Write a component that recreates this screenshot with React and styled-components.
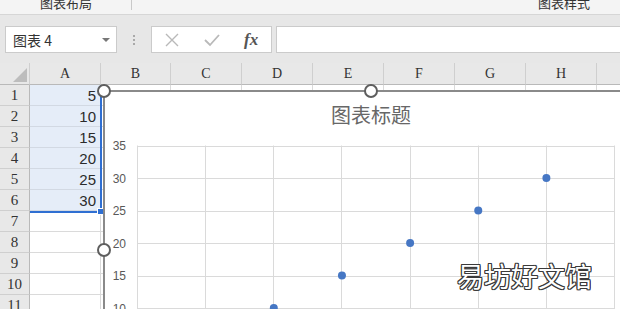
import React from 'react';
import styled, { createGlobalStyle } from 'styled-components';

const COLS = ['A', 'B', 'C', 'D', 'E', 'F', 'G', 'H', 'I'];
const WIDTHS = [30, 71, 70, 71, 71, 71, 71, 71, 71, 71];
const VALUES = [5, 10, 15, 20, 25, 30];
const ROW_COUNT = 11;

// plot geometry inside the chart svg
const X0 = 32;
const STEP_X = 68.15;
const Y0 = 8.5;
const STEP_Y = 32.5;

const GlobalStyle = createGlobalStyle`
  body {
    margin: 0;
    font-family: "Noto Sans CJK SC", "Liberation Sans", sans-serif;
    overflow: hidden;
  }
`;

const App = () => {
  return (
    <Page>
      <GlobalStyle />
      <Ribbon>
        <RibbonGroup>
          <RibbonLabel>图表布局</RibbonLabel>
        </RibbonGroup>
        <RibbonRight>
          <RibbonLabel>图表样式</RibbonLabel>
        </RibbonRight>
      </Ribbon>

      <Toolbar>
        <NameBox>
          <span>图表 4</span>
          <DropArrow />
        </NameBox>
        <Grip>
          <i />
          <i />
          <i />
        </Grip>
        <FormulaButtons>
          <IconSlot>
            <svg width="14" height="14" viewBox="0 0 14 14">
              <path d="M1 1 L13 13 M13 1 L1 13" stroke="#b9b9b9" strokeWidth="1.4" fill="none" />
            </svg>
          </IconSlot>
          <IconSlot>
            <svg width="16" height="14" viewBox="0 0 16 14">
              <path d="M1 7 L6 12 L15 2" stroke="#b9b9b9" strokeWidth="1.8" fill="none" />
            </svg>
          </IconSlot>
          <IconSlot>
            <Fx>fx</Fx>
          </IconSlot>
        </FormulaButtons>
        <FormulaInput />
      </Toolbar>

      <Sheet>
        <Grid>
          <Corner>
            <svg width="30" height="22" viewBox="0 0 30 22">
              <polygon points="27,5 27,19 13,19" fill="#bdbdbd" />
            </svg>
          </Corner>
          {COLS.map(c => (
            <ColHead key={c}>{c}</ColHead>
          ))}
          {Array.from({ length: ROW_COUNT }, (_, r) => (
            <React.Fragment key={r}>
              <RowHead>{r + 1}</RowHead>
              {COLS.map((c, ci) => {
                const selected = ci === 0 && r < VALUES.length;
                return (
                  <Cell key={c} $selected={selected}>
                    {selected ? VALUES[r] : ''}
                  </Cell>
                );
              })}
            </React.Fragment>
          ))}
        </Grid>

        <Selection>
          <FillHandle />
        </Selection>

        <Chart>
          <Handle $x={0} $y={0} />
          <Handle $x={267} $y={0} />
          <Handle $x={0} $y={159} />
          <ChartTitle>图表标题</ChartTitle>
          <svg width="530" height="200" viewBox="0 0 530 200">
            {Array.from({ length: 8 }, (_, i) => (
              <line
                key={'v' + i}
                x1={Math.round(X0 + STEP_X * i) + 0.5}
                x2={Math.round(X0 + STEP_X * i) + 0.5}
                y1={Y0}
                y2={240}
                stroke="#dadada"
              />
            ))}
            {Array.from({ length: 8 }, (_, j) => (
              <g key={'h' + j}>
                <line
                  x1={X0}
                  x2={X0 + STEP_X * 7 + 1}
                  y1={Math.round(Y0 + STEP_Y * j) + 0.5}
                  y2={Math.round(Y0 + STEP_Y * j) + 0.5}
                  stroke="#dadada"
                />
                <AxisText x={21} y={Y0 + STEP_Y * j + 0.5} textAnchor="end" dominantBaseline="central">
                  {35 - 5 * j}
                </AxisText>
              </g>
            ))}
            {VALUES.map((v, i) => (
              <circle
                key={v}
                cx={X0 + 0.5 + STEP_X * (i + 1)}
                cy={Y0 + (35 - v) * (STEP_Y / 5)}
                r="4"
                fill="#4677c4"
              />
            ))}
          </svg>
        </Chart>
      </Sheet>

      <Watermark>易坊好文馆</Watermark>
    </Page>
  );
};

export default App;

const Page = styled.div`
  position: relative;
  width: 620px;
  height: 309px;
  overflow: hidden;
  background-color: #e7e7e7;
`;

const Ribbon = styled.div`
  display: flex;
  height: 14px;
  background-color: #f4f4f4;
  border-bottom: 1px solid #d6d6d6;
  overflow: hidden;
`;

const RibbonGroup = styled.div`
  width: 91px;
  height: 10px;
  padding-left: 40px;
  border-right: 1px solid #c9c9c9;
`;

const RibbonRight = styled.div`
  flex: 1;
  display: flex;
  justify-content: flex-end;
  padding-right: 30px;
`;

const RibbonLabel = styled.div`
  font-size: 13px;
  line-height: 13px;
  margin-top: -4px;
  color: #333;
  white-space: nowrap;
`;

const Toolbar = styled.div`
  display: flex;
  align-items: stretch;
  height: 27px;
  padding: 11px 0 10px 5px;
`;

const NameBox = styled.div`
  box-sizing: border-box;
  display: flex;
  align-items: center;
  justify-content: space-between;
  width: 112px;
  padding: 0 6px 0 7px;
  background-color: #fff;
  border: 1px solid #cbcbcb;
  font-size: 14px;
  color: #333;
`;

const DropArrow = styled.span`
  width: 0;
  height: 0;
  border-left: 4px solid transparent;
  border-right: 4px solid transparent;
  border-top: 4px solid #777;
`;

const Grip = styled.div`
  display: flex;
  flex-direction: column;
  align-items: center;
  justify-content: center;
  gap: 2px;
  width: 34px;

  i {
    width: 2px;
    height: 2px;
    background-color: #a9a9a9;
  }
`;

const FormulaButtons = styled.div`
  box-sizing: border-box;
  display: flex;
  align-items: center;
  width: 121px;
  background-color: #fff;
  border: 1px solid #cbcbcb;
`;

const IconSlot = styled.div`
  display: flex;
  align-items: center;
  justify-content: center;
  width: 40px;
`;

const Fx = styled.span`
  font-family: "Liberation Serif", serif;
  font-style: italic;
  font-weight: bold;
  font-size: 17px;
  color: #555;
`;

const FormulaInput = styled.div`
  box-sizing: border-box;
  flex: 1;
  margin-left: 4px;
  margin-right: -4px;
  background-color: #fff;
  border: 1px solid #cbcbcb;
`;

const Sheet = styled.div`
  position: relative;
  height: 246px;
  overflow: hidden;
  background-color: #fff;
`;

const Grid = styled.div`
  display: grid;
  grid-template-columns: ${WIDTHS.map(w => w + 'px').join(' ')};
  grid-template-rows: 22px repeat(${ROW_COUNT}, 21px);
`;

const Corner = styled.div`
  background-color: #e8e8e8;
  border-right: 1px solid #cfcfcf;
  border-bottom: 1px solid #b9b9b9;
  box-sizing: border-box;

  svg {
    display: block;
  }
`;

const ColHead = styled.div`
  box-sizing: border-box;
  display: flex;
  align-items: center;
  justify-content: center;
  background-color: #e8e8e8;
  border-right: 1px solid #cfcfcf;
  border-bottom: 1px solid #b9b9b9;
  font-family: "Liberation Serif", serif;
  font-size: 14px;
  color: #333;
`;

const RowHead = styled.div`
  box-sizing: border-box;
  display: flex;
  align-items: center;
  justify-content: center;
  background-color: #e8e8e8;
  border-right: 1px solid #b9b9b9;
  border-bottom: 1px solid #cfcfcf;
  font-family: "Liberation Serif", serif;
  font-size: 15px;
  color: #333;
`;

const Cell = styled.div`
  box-sizing: border-box;
  display: flex;
  align-items: center;
  justify-content: flex-end;
  padding-right: 4px;
  background-color: ${({ $selected }) => ($selected ? '#e5edf8' : '#fff')};
  border-right: 1px solid #dadada;
  border-bottom: 1px solid ${({ $selected }) => ($selected ? '#d2d9e3' : '#dadada')};
  font-family: "Liberation Sans", sans-serif;
  font-size: 15px;
  color: #2b2b2b;
`;

const Selection = styled.div`
  position: absolute;
  left: 30px;
  top: 22px;
  width: 70px;
  height: 126px;
  border-right: 2px solid #2f6fd2;
  border-bottom: 2px solid #2f6fd2;
  pointer-events: none;
`;

const FillHandle = styled.div`
  position: absolute;
  right: -4px;
  bottom: -4px;
  width: 5px;
  height: 5px;
  background-color: #2f6fd2;
  border: 1px solid #fff;
`;

const Chart = styled.div`
  position: absolute;
  left: 103px;
  top: 27px;
  width: 532px;
  height: 318px;
  background-color: #fff;
  border-left: 2px solid #8a8a8a;
  border-top: 2px solid #8a8a8a;

  svg {
    display: block;
  }
`;

const Handle = styled.div`
  position: absolute;
  left: ${({ $x }) => $x - 8}px;
  top: ${({ $y }) => $y - 8}px;
  width: 10px;
  height: 10px;
  border: 2px solid #5e5e5e;
  border-radius: 50%;
  background-color: #fff;
`;

const ChartTitle = styled.div`
  height: 45px;
  padding-top: 11px;
  box-sizing: border-box;
  text-align: center;
  font-size: 20px;
  line-height: 23px;
  color: #676767;
`;

const AxisText = styled.text`
  font-family: "Liberation Sans", sans-serif;
  font-size: 12px;
  fill: #595959;
`;

const Watermark = styled.div`
  position: absolute;
  left: 457px;
  top: 259px;
  font-size: 27px;
  line-height: 34px;
  color: #fff;
  text-shadow: -1px 0 #3a3a3a, 1px 0 #3a3a3a, 0 -1px #3a3a3a, 0 1px #3a3a3a,
    -1px -1px #3a3a3a, 1px 1px #3a3a3a, -1px 1px #3a3a3a, 1px -1px #3a3a3a;
`;
